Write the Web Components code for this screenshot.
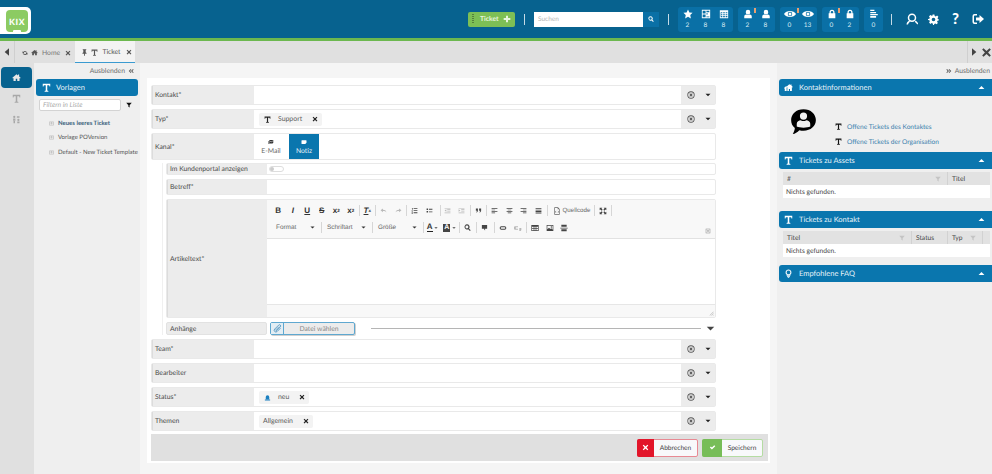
<!DOCTYPE html>
<html lang="de">
<head>
<meta charset="utf-8">
<title>KIX Ticket</title>
<style>
  html, body { margin: 0; padding: 0; }
  body { width: 992px; height: 474px; overflow: hidden; font-family: Lato, "Open Sans", sans-serif; font-size: 8px; color: #4a4a4a; background: #f5f5f5; text-rendering: geometricPrecision; }
</style>
</head>
<body>
<kix-app></kix-app>
<script>
// icon shapes, all on a 24x24 box
const ICONS = {
  t: '<path d="M2 2h20v7h-2l-1-3h-5v14l3 1v2H7v-2l3-1V6H5L4 9H2z"/>',
  home: '<path d="M12 3 1 12.5 2.5 14.5 4 13.2V21h6v-6h4v6h6v-7.8l1.5 1.3 1.5-2-4-3.4V4h-3v2.6z"/>',
  homes: '<path d="M14 3 6 10.5 7.5 12 9 11v10h4v-5h3v5h5V11l1 1 1.6-1.5L20 7.500V4h-2.500v1.500zM6 8 0 13.500 1 15l1-.7V21h5V10z"/>',
  x: '<path d="M5.500 2.500 12 8.500l6.500-6 3 3-6 6.500 6 6.500-3 3-6.500-6-6.500 6-3-3 6-6.500-6-6.500z"/>',
  plus: '<path d="M9 2h6v7h7v6h-7v7H9v-7H2V9h7z"/>',
  star: '<path d="m12 1 3.400 7.300 7.600.9-5.600 5.400 1.500 7.900L12 18.600 5.100 22.500l1.500-7.900L1 9.200l7.600-.9z"/>',
  search: '<path fill-rule="evenodd" d="M10 1a9 9 0 0 1 7.200 14.400l5.800 5.800-2.800 2.800-5.800-5.800A9 9 0 1 1 10 1zm0 4a5 5 0 1 0 0 10 5 5 0 0 0 0-10z"/>',
  user: '<path d="M12 2a5.500 5.500 0 1 1 0 11 5.500 5.500 0 0 1 0-11zM3 22v-4c0-3 2-5 5-5 2.500 1.500 5.500 1.500 8 0 3 0 5 2 5 5v4z"/>',
  eye: '<path fill-rule="evenodd" d="M0 12C4 4 20 4 24 12 20 20 4 20 0 12zm12-4.500a4.500 4.500 0 1 0 0 9 4.500 4.500 0 0 0 0-9zm0 1.500a3 3 0 1 1 0 6 3 3 0 0 1 0-6z"/>',
  lock: '<path fill-rule="evenodd" d="M6 10V8a6 6 0 0 1 12 0v2h2v12H4V10zm3 0h6V8a3 3 0 0 0-6 0z"/>',
  board: '<path fill-rule="evenodd" d="M2 2h20v20H2zm2 2v7h7V4zm9 0v4h7V4zm0 6v3h3v-3zm-9 3v7h7v-7zm9 5v2h7v-2z"/>',
  cal: '<path fill-rule="evenodd" d="M2 3h20v19H2zm2 5v12h4v-4H5v-2h3v-2H5v-2h3V8zm6 0v2h4V8zm6 0v2h4V8zm-6 4v2h4v-2zm6 0v2h4v-2zm-6 4v4h4v-4zm6 0v4h4v-4z"/>',
  list: '<path d="M3 2h10v3H3zM3 7h14v3H3zM3 12h18v3H3zM3 17h14v4H3z"/>',
  gear: '<path fill-rule="evenodd" d="M10 1h4l.7 3.200 2.300 1 2.800-1.800 2.800 2.800L20.800 9l1 2.300L24 12v0l0 1.900-3.200.7-1 2.300 1.800 2.800-2.800 2.800-2.800-1.800-2.300 1L13 24h-2l-.7-3.200-2.300-1-2.800 1.800-2.800-2.800L4 16l-1-2.300L0 13v-2l3-.7 1-2.300-1.800-2.800 2.800-2.800L8 4l2-.8zm2 7a4 4 0 1 0 0 8 4 4 0 0 0 0-8z"/>',
  signout: '<path d="M10 2H5a4 4 0 0 0-4 4v12a4 4 0 0 0 4 4h5v-3H5.500A1.500 1.500 0 0 1 4 17.500v-11A1.500 1.500 0 0 1 5.500 5H10z"/><path d="M15 4l9 8-9 8v-5H8V9h7z"/>',
  usersearch: '<path fill-rule="evenodd" d="M12 1a8.500 8.500 0 1 1 0 17 8.500 8.500 0 0 1 0-17zm0 3a5.500 5.500 0 1 0 0 11 5.500 5.500 0 0 0 0-11z"/><path d="M1 23c0-3 2-6 5-7.500l2.500 2C6 19 4.500 20.500 4 23zM23 23l-5.500-5.500 2-2.500 5 5.500z"/>',
  pin: '<path d="M6 1h12v2.500l-2 1V11l3 3v2.500h-5.500V22L12 24l-1.500-2v-5.500H5V14l3-3V4.500l-2-1z"/>',
  refresh: '<path d="M19.500 9A8 8 0 0 0 5 7.500L2 5v8h8L7.500 10A5 5 0 0 1 16.500 10zM4.500 15A8 8 0 0 0 19 16.500l3 2.500v-8h-8l2.500 3a5 5 0 0 1-9 0z"/>',
  left: '<path d="M18 1v22L5 12z"/>',
  right: '<path d="M6 1v22l13-11z"/>',
  up: '<path d="M12 7 22 17H2z"/>',
  down: '<path d="M2 7h20L12 17z"/>',
  funnel: '<path d="M1 3h22l-8.500 9.500V22l-5-3v-6.500z"/>',
  dleft: '<path d="M11 4 3 12l8 8 2.500-2.500L8 12l5.500-5.500zM20 4l-8 8 8 8 2.500-2.500L17 12l5.500-5.500z"/>',
  dright: '<path d="m4 4 8 8-8 8-2.500-2.500L7 12 1.500 6.500zm9 0 8 8-8 8-2.500-2.500L16 12l-5.500-5.500z"/>',
  mail: '<path d="M5 4h16v12H5zM2 8h2v10h15v2H2z"/><path fill="#fff" d="m6 6 7 5 7-5v1.500l-7 5-7-5z"/>',
  note: '<path d="M4 5h16a2 2 0 0 1 2 2v8l-5 5H4a2 2 0 0 1-2-2V7a2 2 0 0 1 2-2z"/>',
  doc: '<path fill-rule="evenodd" d="M3 2h18v20H3zm2 2v16h14V4zm3 3h8v2H8zm0 4h8v2H8zm0 4h8v2H8z"/>',
  bubble: '<path fill-rule="evenodd" d="M12 1c6.500 0 11 4.300 11 9.700 0 5.300-4.500 9.500-11 9.500-1.300 0-2.500-.2-3.700-.5C6.500 21.500 4.500 23 2.500 23c1-1.500 1.700-3.300 1.800-5.200C2 16 1 13.500 1 10.700 1 5.300 5.500 1 12 1zm0 3a3.200 3.200 0 1 0 0 6.400A3.200 3.200 0 0 0 12 4zM6 16.500c2.500 1.300 9.500 1.300 12 0V14c0-2-2-3.200-3.500-3.200-1.500 1-3.500 1-5 0C8 10.800 6 12 6 14z"/>',
  bulb: '<path fill-rule="evenodd" d="M12 1a8 8 0 0 1 5 14.200V18H7v-2.800A8 8 0 0 1 12 1zm0 3a5 5 0 0 0-3 9l1 1h4l1-1a5 5 0 0 0-3-9zM8 19h8v2H8zM10 22h4v2h-4z"/>',
  people: '<path d="M6 2a3 3 0 1 1 0 6 3 3 0 0 1 0-6zM3 9h6v6H3zM4 16h4v6H4zM17 10a3 3 0 1 1 0 6 3 3 0 0 1 0-6zM14 17h6v5h-6zM13 3h7v2h-7zM13 6h7v2h-7z"/>',
  circlex: '<path fill-rule="evenodd" d="M12 1a11 11 0 1 1 0 22 11 11 0 0 1 0-22zm0 2.500a8.500 8.500 0 1 0 0 17 8.500 8.500 0 0 0 0-17zM9 7l3 3 3-3 2 2-3 3 3 3-2 2-3-3-3 3-2-2 3-3-3-3z"/>',
  check: '<path d="M3 12l3.500-3.500L10 12l8-8 3.500 3.500L10 19z"/>',
  clip: '<path fill="none" stroke="currentColor" stroke-width="2" d="M20 11 11 20a4.500 4.500 0 0 1-6.500-6.500L15 3a3 3 0 0 1 4.500 4.500L9.500 17.500a1.500 1.500 0 0 1-2-2L16 7"/>',
  beacon: '<path d="M6 10a6 6 0 0 1 12 0v8H6zM3 19h18v3H3z"/>',
  undo: '<path d="M10 5v4c6 0 11 2 12 10-2-4-6-5-12-5v4L2 11z"/>',
  redo: '<path d="M14 5v4C8 9 3 11 2 19c2-4 6-5 12-5v4l8-7z"/>',
  ol: '<path d="M9 4h13v3H9zM9 11h13v3H9zM9 18h13v3H9zM3 3h3v6H4V5H3zM2 12h4v1.500L4.500 15H6v1.500H2V15l2-1.500H2zM2 18h4v5H2v-1.200h2.500v-.8H3v-.8h1.500v-.8H2z"/>',
  ul: '<path d="M2 5h5v5H2zM10 6h12v3H10zM2 14h5v5H2zM10 15h12v3H10z"/>',
  outdent: '<path d="M2 3h20v2.500H2zM11 8h11v2.500H11zM11 13h11v2.500H11zM2 18.500h20V21H2zM8 7.500v9L2 12z"/>',
  indent: '<path d="M2 3h20v2.500H2zM11 8h11v2.500H11zM11 13h11v2.500H11zM2 18.500h20V21H2zM2 7.500v9L8 12z"/>',
  quote: '<path d="M3 5h7v7c0 4-2 6-5 7l-1-2c2-1 3-2 3-4H3zM14 5h7v7c0 4-2 6-5 7l-1-2c2-1 3-2 3-4h-4z"/>',
  al: '<path d="M2 4h20v2.500H2zM2 9h12v2.500H2zM2 14h20v2.500H2zM2 19h12v2.500H2z"/>',
  ac: '<path d="M2 4h20v2.500H2zM6 9h12v2.500H6zM2 14h20v2.500H2zM6 19h12v2.500H6z"/>',
  ar: '<path d="M2 4h20v2.500H2zM10 9h12v2.500H10zM2 14h20v2.500H2zM10 19h12v2.500H10z"/>',
  aj: '<path d="M2 4h20v3H2zM2 9h20v3H2zM2 14h20v3H2zM2 19h20v3H2z"/>',
  source: '<path fill-rule="evenodd" d="M4 1h11l5 5v17H4zm2 2v18h12V7h-4V3zM9 11l-3 3.500L9 18l1-1-2-2.500 2-2.500zm6 0-1 1 2 2.500-2 2.500 1 1 3-3.500z"/>',
  max: '<path d="M2 2h8L7.500 4.500 11 8 8 11 4.500 7.500 2 10zM22 2v8l-2.500-2.500L16 11l-3-3 3.500-3.500L14 2zM2 22v-8l2.500 2.500L8 13l3 3-3.500 3.500L10 22zM22 22h-8l2.500-2.500L13 16l3-3 3.500 3.500L22 14z"/>',
  flag: '<path d="M3 3h18v13h-7v6l-3-3v-3H3z"/>',
  link: '<path fill-rule="evenodd" d="M7 7h10a5 5 0 0 1 0 10H7A5 5 0 0 1 7 7zm0 3a2 2 0 1 0 0 4h10a2 2 0 1 0 0-4z"/>',
  unlink: '<path fill-rule="evenodd" d="M3 7h9v3H7a2 2 0 1 0 0 4h5v3H7A5 5 0 0 1 3 7zm13 5h6v6l-2 3h-4z"/>',
  table: '<path fill-rule="evenodd" d="M1 3h22v18H1zm2 5v4h5V8zm7 0v4h4V8zm6 0v4h5V8zM3 14v5h5v-5zm7 0v5h4v-5zm6 0v5h5v-5z"/>',
  image: '<path fill-rule="evenodd" d="M2 3h20v18H2zm2 2v11l5-5 4 4 3-2 4 4V5zm12 2a2 2 0 1 1 0 4 2 2 0 0 1 0-4z"/>',
  hr: '<path d="M4 2h16v6H4zM1 11h22v2.500H1zM4 16h16v6H4z"/>',
  collapse: '<path fill-rule="evenodd" d="M3 3h18v18H3zm2 2v14h14V5zm2 5h10l-5 6z"/>',
  resize: '<path d="M22 6v2L8 22H6zM22 13v2l-7 7h-2zM22 19v2l-1 1h-2z"/>'
};

class KixIcon extends HTMLElement {
  connectedCallback() {
    if (this.shadowRoot) return;
    const size = this.getAttribute('size') || 10;
    this.attachShadow({mode: 'open'}).innerHTML =
      `<style>:host{display:inline-flex;flex:none;line-height:0} svg{display:block;fill:currentColor}</style>
       <svg width="${size}" height="${size}" viewBox="0 0 24 24">${ICONS[this.getAttribute('name')] || ''}</svg>`;
  }
}
customElements.define('kix-icon', KixIcon);

class KixStat extends HTMLElement {
  connectedCallback() {
    if (this.shadowRoot) return;
    const flag = this.hasAttribute('flag') ? '<i></i>' : '';
    const icon = this.getAttribute('icon');
    this.attachShadow({mode: 'open'}).innerHTML =
      `<style>
        :host{display:flex;flex-direction:column;align-items:center;width:18px;color:#d5e8f2;font-size:6.500px;line-height:9px;gap:2px}
        .ic{position:relative;height:10px;color:#fff;display:flex;align-items:center}
        i{position:absolute;right:-3px;top:-1px;width:1.5px;height:5px;background:#e8a070}
      </style>
      <div class="ic"><kix-icon name="${icon}" size="${icon == 'eye' ? 12 : 10}"></kix-icon>${flag}</div>
      <span>${this.getAttribute('value')}</span>`;
  }
}
customElements.define('kix-stat', KixStat);

class KixStatGroup extends HTMLElement {
  constructor() {
    super();
    this.attachShadow({mode: 'open'}).innerHTML =
      `<style>:host{display:flex;align-items:center;height:25px;background:#0a70a6;border-radius:3px;padding:0 .5px;margin-right:5px}</style><slot></slot>`;
  }
}
customElements.define('kix-stat-group', KixStatGroup);

class KixHeader extends HTMLElement {
  constructor() {
    super();
    this.attachShadow({mode: 'open'}).innerHTML =
      `<style>
        :host{display:flex;align-items:center;height:38px;background:#07628f;border-bottom:3px solid #6cb84f;color:#fff}
        .logo{width:31px;height:27px;margin-top:3px;background:#fff;border-radius:0 5px 5px 0;display:flex;justify-content:flex-end;align-items:center;padding-right:3px;box-sizing:border-box}
        .logo div{width:22px;height:22px;background:#8ccb62;border-radius:4px;color:#fff;font:900 8.500px Lato,sans-serif;display:flex;flex-direction:column;align-items:center;justify-content:flex-end;letter-spacing:.6px}
        .logo span{line-height:8px;margin-bottom:4px}
        .logo i{width:8px;height:2px;background:#fff;border-radius:1px 1px 0 0}
        .new{margin-left:437px;width:47px;height:15px;background:#7dbf55;border-radius:2px;display:flex;align-items:center;box-sizing:border-box;padding:0 4px 0 4px;font-size:6.800px;font-weight:700;color:#e8f5df}
        .new b{width:2px;height:10px;margin-right:6px;background:repeating-linear-gradient(#55803c 0 1px,transparent 1px 2px)}
        .new kix-icon{margin-left:auto}
        .sep{width:1px;height:11px;background:#c5dbe6}
        .s1{margin:0 9px}.s2{margin:0 9px}.s3{margin:0 14px 0 3px}
        .search{display:flex;height:15px}
        .search div{width:109px;background:#fff;color:#b5b5b5;font-size:6.500px;line-height:15px;padding-left:4px;box-sizing:border-box}
        .search span{width:16px;background:#0a70a6;display:flex;align-items:center;justify-content:center}
        .tools{display:flex;align-items:center}
        .q{font:900 15px Lato,sans-serif;line-height:14px;width:13px;text-align:center}
      </style>
      <div class="logo"><div><span>KIX</span><i></i></div></div>
      <div class="new"><b></b><span>Ticket</span><kix-icon name="plus" size="8"></kix-icon></div>
      <div class="sep s1"></div>
      <div class="search"><div>Suchen</div><span><kix-icon name="search" size="6"></kix-icon></span></div>
      <div class="sep s2"></div>
      <kix-stat-group><kix-stat icon="star" value="2"></kix-stat><kix-stat icon="board" value="8"></kix-stat><kix-stat icon="cal" value="8"></kix-stat></kix-stat-group>
      <kix-stat-group><kix-stat icon="user" value="2" flag></kix-stat><kix-stat icon="user" value="8"></kix-stat></kix-stat-group>
      <kix-stat-group><kix-stat icon="eye" value="0" flag></kix-stat><kix-stat icon="eye" value="13"></kix-stat></kix-stat-group>
      <kix-stat-group><kix-stat icon="lock" value="0" flag></kix-stat><kix-stat icon="lock" value="2"></kix-stat></kix-stat-group>
      <kix-stat-group><kix-stat icon="list" value="0"></kix-stat></kix-stat-group>
      <div class="sep s3"></div>
      <div class="tools">
        <kix-icon name="usersearch" size="12" style="margin-right:10px"></kix-icon>
        <kix-icon name="gear" size="11" style="margin-right:10px"></kix-icon>
        <div class="q">?</div>
        <kix-icon name="signout" size="12" style="margin-left:10px"></kix-icon>
      </div>`;
  }
}
customElements.define('kix-header', KixHeader);

class KixTab extends HTMLElement {
  constructor() {
    super();
    this.attachShadow({mode: 'open'}).innerHTML =
      `<style>
        :host{display:flex;align-items:center;justify-content:center;gap:3px;width:60px;height:22px;box-sizing:border-box;font-size:6.800px;color:#777;padding:1px 0 0 3px}
        :host([active]){background:#f3f3f3;border-bottom:1px solid #3a9ad0;color:#555}
        ::slotted(kix-icon){color:#555}
        ::slotted(span){margin:0 2px 0 1px}
      </style><slot></slot>`;
  }
}
customElements.define('kix-tab', KixTab);

class KixTabbar extends HTMLElement {
  constructor() {
    super();
    this.attachShadow({mode: 'open'}).innerHTML =
      `<style>
        :host{display:flex;align-items:stretch;height:22px;background:#e0e0e0;color:#444}
        .end{display:flex;align-items:center;justify-content:center}
        .l{width:14px;border-right:1px solid #cfcfcf;margin-right:0}
        .r{margin-left:auto;width:25px;border-left:1px solid #cfcfcf;gap:3px;justify-content:flex-start;padding-left:2px;box-sizing:border-box}
      </style>
      <div class="end l"><kix-icon name="left" size="8"></kix-icon></div>
      <kix-tab><kix-icon name="refresh" size="6"></kix-icon><kix-icon name="home" size="7"></kix-icon><span>Home</span><kix-icon name="x" size="6"></kix-icon></kix-tab>
      <kix-tab active><kix-icon name="pin" size="7"></kix-icon><kix-icon name="t" size="7"></kix-icon><span>Ticket</span><kix-icon name="x" size="6"></kix-icon></kix-tab>
      <div class="end r"><kix-icon name="right" size="8"></kix-icon><kix-icon name="x" size="11"></kix-icon></div>`;
  }
}
customElements.define('kix-tabbar', KixTabbar);

class KixNav extends HTMLElement {
  constructor() {
    super();
    this.attachShadow({mode: 'open'}).innerHTML =
      `<style>
        :host{display:flex;flex-direction:column;align-items:flex-start;background:#e0e0e0;padding:4px 0 0 1px;box-sizing:border-box;color:#a8a8a8}
        div{width:31px;height:21px;display:flex;align-items:center;justify-content:center}
        .on{background:#07628f;border-radius:4px;color:#e8e8e8}
      </style>
      <div class="on"><kix-icon name="home" size="9"></kix-icon></div>
      <div><kix-icon name="t" size="9"></kix-icon></div>
      <div><kix-icon name="people" size="9"></kix-icon></div>`;
  }
}
customElements.define('kix-nav', KixNav);

class KixHide extends HTMLElement {
  connectedCallback() {
    if (this.shadowRoot) return;
    const right = this.hasAttribute('right');
    this.attachShadow({mode: 'open'}).innerHTML =
      `<style>:host{display:flex;align-items:center;justify-content:flex-end;gap:3px;height:16px;color:#6e6e6e;font-size:6.800px;padding-right:${right ? 2 : 4}px;box-sizing:border-box}
       kix-icon{color:#555}</style>` +
      (right ? '<kix-icon name="dright" size="6"></kix-icon><span>Ausblenden</span>'
             : '<span>Ausblenden</span><kix-icon name="dleft" size="6"></kix-icon>');
  }
}
customElements.define('kix-hide', KixHide);

class KixBar extends HTMLElement {
  connectedCallback() {
    if (this.shadowRoot) return;
    const arrow = this.hasAttribute('open') ? '<kix-icon class="a" name="up" size="7"></kix-icon>' : '';
    this.attachShadow({mode: 'open'}).innerHTML =
      `<style>
        :host{display:flex;align-items:center;height:17px;background:#0a76ae;border-radius:3px 0 0 3px;color:#e8f3f9;font-size:7.500px;padding:0 7px 0 4px;gap:6px;box-sizing:border-box}
        :host([round]){border-radius:3px;padding-left:5px;gap:5px}
        .i{width:10px;display:flex;justify-content:center;color:#fff}
        .a{margin-left:auto;color:#fff}
      </style>
      <span class="i"><kix-icon name="${this.getAttribute('icon')}" size="${this.getAttribute('size') || 9}"></kix-icon></span><span>${this.getAttribute('label')}</span>${arrow}`;
  }
}
customElements.define('kix-bar', KixBar);

class KixTemplates extends HTMLElement {
  constructor() {
    super();
    const item = (t, b) => `<li class="${b ? 'b' : ''}"><kix-icon name="doc" size="5"></kix-icon><span>${t}</span></li>`;
    this.attachShadow({mode: 'open'}).innerHTML =
      `<style>
        :host{display:block;background:#efefef;padding:0 2px}
        .f{display:flex;align-items:center;margin:3px 0 0 3px}
        .f div{width:82px;height:12px;border:1px solid #d3d3d3;border-radius:2px;background:#fff;box-sizing:border-box;font-style:italic;color:#aaa;font-size:6.800px;line-height:10px;padding-left:3px}
        .f kix-icon{margin-left:5px;color:#111}
        ul{list-style:none;margin:5px 0 0;padding:0 0 0 13px}
        li{display:flex;align-items:center;gap:4px;height:14.500px;font-size:6px;color:#555;white-space:nowrap}
        li kix-icon{color:#999}
        li.b{font-weight:700;color:#37607a}
      </style>
      <kix-hide></kix-hide>
      <kix-bar round icon="t" label="Vorlagen"></kix-bar>
      <div class="f"><div>Filtern in Liste</div><kix-icon name="funnel" size="6"></kix-icon></div>
      <ul>${item('Neues leeres Ticket', true)}${item('Vorlage POVersion')}${item('Default - New Ticket Template')}</ul>`;
  }
}
customElements.define('kix-templates', KixTemplates);

class KixRow extends HTMLElement {
  connectedCallback() {
    if (this.shadowRoot) return;
    const w = this.getAttribute('label-width') || 103;
    const actions = this.hasAttribute('actions')
      ? '<div class="act"><kix-icon name="circlex" size="8"></kix-icon><kix-icon name="down" size="6"></kix-icon></div>' : '';
    this.attachShadow({mode: 'open'}).innerHTML =
      `<style>
        :host{display:flex;height:20px;box-sizing:border-box;background:#fff;border:1px solid #e9e9e9;border-radius:2px;font-size:6.800px}
        .lab{width:${w - 1}px;flex:none;background:#ececec;color:#4a4a4a;display:flex;align-items:center;padding-left:3px;box-sizing:border-box;box-shadow:inset 1px 0 #dcdcdc}
        :host([tall]) .lab{padding-left:3px}
        .val{flex:1;min-width:0;display:flex;align-items:center}
        .act{width:34px;flex:none;background:#ececec;display:flex;align-items:center;gap:10px;padding-left:6px;box-sizing:border-box;color:#555}
        .act kix-icon:last-child{color:#222}
      </style>
      <div class="lab">${this.getAttribute('label')}</div><div class="val"><slot></slot></div>${actions}`;
  }
}
customElements.define('kix-row', KixRow);

class KixChip extends HTMLElement {
  connectedCallback() {
    if (this.shadowRoot) return;
    const icon = this.getAttribute('icon');
    this.attachShadow({mode: 'open'}).innerHTML =
      `<style>
        :host{display:inline-flex;align-items:center;height:13px;margin-left:5px;background:#f3f3f3;border-radius:2px;padding:0 4px 0 4px;font-size:6.900px;color:#5a5a5a}
        .i{width:7px;margin:0 7px 0 1px;color:#222;display:flex}
        .x{margin-left:10px;color:#222}
      </style>
      ${icon ? `<span class="i" style="color:${this.getAttribute('icon-color') || '#222'}"><kix-icon name="${icon}" size="7"></kix-icon></span>` : ''}
      <span>${this.getAttribute('label')}</span><kix-icon class="x" name="x" size="6"></kix-icon>`;
  }
}
customElements.define('kix-chip', KixChip);

class KixChannel extends HTMLElement {
  connectedCallback() {
    if (this.shadowRoot) return;
    this.attachShadow({mode: 'open'}).innerHTML =
      `<style>
        :host{display:flex;flex-direction:column;align-items:center;justify-content:center;gap:2px;width:${this.getAttribute('w') || 30}px;height:25px;font-size:6.800px;color:#666;background:#fff;margin-right:1px}
        :host([active]){background:#0a76ae;color:#e6f2f8}
        kix-icon{color:#333}
        :host([active]) kix-icon{color:#fff}
      </style>
      <kix-icon name="${this.getAttribute('icon')}" size="6"></kix-icon><span>${this.getAttribute('label')}</span>`;
  }
}
customElements.define('kix-channel', KixChannel);

class KixEditor extends HTMLElement {
  constructor() {
    super();
    const ic = (n, dim, size) => `<span class="b${dim ? ' dim' : ''}"><kix-icon name="${n}" size="${size || 7}"></kix-icon></span>`;
    const tx = h => `<span class="b tx">${h}</span>`;
    const sep = (m) => `<i class="sep"${m ? ` style="margin:${m}"` : ''}></i>`;
    const combo = (t, w) => `<span class="combo" style="width:${w}px"><span>${t}</span><kix-icon name="down" size="5"></kix-icon></span>`;
    const colour = h => `<span class="col">${h}<kix-icon name="down" size="4"></kix-icon></span>`;
    this.attachShadow({mode: 'open'}).innerHTML =
      `<style>
        :host{display:flex;flex-direction:column;flex:1;height:100%;background:#fff;box-sizing:border-box;font-family:"Liberation Sans",sans-serif}
        .bar{background:#f8f8f8;height:39px;border-bottom:1px solid #e2e2e2;box-sizing:border-box;padding:2px 0 0 4px;flex:none;position:relative}
        .r{display:flex;align-items:center;height:17px;color:#444}
        .b{width:14.500px;flex:none;display:flex;align-items:center;justify-content:center;height:14px}
        .dim{opacity:.35}
        .tx{font:700 8px "Liberation Sans",sans-serif;color:#333}
        .tx sub,.tx sup{font-size:4.500px;line-height:0}
        .sep{width:1px;height:11px;background:#d6d6d6;flex:none;margin:0 .5px}
        .src{display:flex;align-items:center;gap:2px;color:#666;font-size:6.200px;padding:0 0 0 4px;width:45px;box-sizing:border-box;flex:none}
        .combo{display:flex;align-items:center;justify-content:space-between;box-sizing:border-box;padding:0 5px 0 5px;font-size:6.400px;color:#666;flex:none}
        .combo kix-icon{color:#333}
        .col{display:flex;align-items:center;justify-content:center;gap:1.5px;width:17px;flex:none}
        .col b{font:700 8px "Liberation Sans",sans-serif;border-bottom:1.500px solid #222;line-height:8px;color:#333}
        .col em{font:700 7px "Liberation Sans",sans-serif;background:#444;color:#fff;padding:0 1px;line-height:8px}
        .collapse{position:absolute;right:4px;bottom:4px;color:#888}
        .edit{flex:1;background:#fff}
        .foot{flex:none;height:13px;background:#f8f8f8;border-top:1px solid #e6e6e6;display:flex;justify-content:flex-end;align-items:flex-end;padding:0 1px 1px 0;box-sizing:border-box;color:#999}
      </style>
      <div class="bar">
        <div class="r">${tx('B')}${tx('<em>I</em>')}${tx('<u>U</u>')}${tx('<s>S</s>')}${tx('x<sub>2</sub>')}${tx('x<sup>2</sup>')}${sep()}${tx('<em><u>T</u></em><sub>x</sub>')}${sep()}${ic('undo', 1)}${ic('redo', 1)}${sep()}${ic('ol')}${ic('ul')}${sep('0 -.5px 0 3px')}${ic('outdent', 1)}${ic('indent', 1)}${sep()}${ic('quote')}${sep()}${ic('al')}${ic('ac')}${ic('ar')}${ic('aj')}${sep('0 .5px 0 1.500px')}<span class="src"><kix-icon name="source" size="8"></kix-icon><span>Quellcode</span></span>${sep()}${ic('max', 0, 8)}${sep()}</div>
        <div class="r">${combo('Format', 49)}${sep()}${combo('Schriftart', 49)}${sep()}${combo('Größe', 49)}${sep()}${colour('<b>A</b>')}${colour('<em>A</em>')}${sep()}${ic('search')}${sep('0 1px')}${ic('flag')}${sep('0 1.500px')}${ic('link', 0, 8)}${ic('unlink', 1, 8)}${sep('0 1px')}${ic('table', 0, 8)}${ic('image', 0, 8)}${ic('hr', 0, 8)}</div>
        <kix-icon class="collapse" name="collapse" size="6"></kix-icon>
      </div>
      <div class="edit"></div>
      <div class="foot"><kix-icon name="resize" size="6"></kix-icon></div>`;
  }
}
customElements.define('kix-editor', KixEditor);

class KixAttachments extends HTMLElement {
  constructor() {
    super();
    this.attachShadow({mode: 'open'}).innerHTML =
      `<style>
        :host{display:flex;align-items:center;height:13px;font-size:6.800px}
        .lab{width:101px;height:13px;flex:none;background:#ececec;border:1px solid #e2e2e2;border-radius:2px;box-sizing:border-box;display:flex;align-items:center;padding-left:3px;color:#4a4a4a}
        .file{margin-left:3px;width:85px;height:13px;border:1px solid #5fa8d0;border-radius:2px;box-sizing:border-box;background:#ececec;display:flex;align-items:stretch;color:#888;box-shadow:1px 1px 0 #d0d0d0}
        .clip{width:12px;border-right:1px solid #5fa8d0;display:flex;align-items:center;justify-content:center;color:#3a86b5;background:#e4eef4}
        .txt{flex:1;display:flex;align-items:center;justify-content:center}
        .line{flex:1;height:1px;background:#b5b5b5;margin:0 5px 0 16px}
        .c{color:#444;margin-right:1px}
      </style>
      <div class="lab">Anhänge</div>
      <div class="file"><span class="clip"><kix-icon name="clip" size="9"></kix-icon></span><span class="txt">Datei wählen</span></div>
      <div class="line"></div><kix-icon class="c" name="down" size="9"></kix-icon>`;
  }
}
customElements.define('kix-attachments', KixAttachments);

class KixButton extends HTMLElement {
  connectedCallback() {
    if (this.shadowRoot) return;
    const c = this.getAttribute('color');
    this.attachShadow({mode: 'open'}).innerHTML =
      `<style>
        :host{display:flex;width:61px;height:18px;border:1px solid ${this.getAttribute('edge')};border-radius:2px;box-sizing:border-box;background:#f8f9fb;font-size:6.600px;color:#444}
        .i{width:${this.getAttribute('w')}px;background:${c};color:#fff;display:flex;align-items:center;justify-content:center;margin:-1px 0 -1px -1px;border-radius:2px 0 0 2px}
        .t{flex:1;display:flex;align-items:center;justify-content:center}
      </style>
      <span class="i"><kix-icon name="${this.getAttribute('icon')}" size="7"></kix-icon></span><span class="t">${this.getAttribute('label')}</span>`;
  }
}
customElements.define('kix-button', KixButton);

class KixForm extends HTMLElement {
  constructor() {
    super();
    this.attachShadow({mode: 'open'}).innerHTML =
      `<style>
        :host{display:block;background:#f5f5f5;padding:15px 7px 0}
        .sheet{background:#fff;height:385px;padding:7px 2px 0 4px;box-sizing:border-box}
        .rows{width:565px;display:flex;flex-direction:column;gap:4px}
        .kanal{height:27px}
        .nested{margin:-1px 0 0 11px;border-left:1px solid #f0f0f0;padding-left:3px;display:flex;flex-direction:column;gap:4px}
        .toggle{width:15px;height:6px;border:1px solid #ddd;border-radius:4px;box-sizing:border-box;margin-left:2px;position:relative;background:#fff}
        .toggle::before{content:"";position:absolute;left:0;top:0;width:4px;height:4px;background:#ccc;border-radius:50%}
        .foot{margin-top:3px;width:617px;height:27px;background:#e0e0e0;display:flex;justify-content:flex-end;align-items:center;gap:4px;padding-right:5px;box-sizing:border-box}
      </style>
      <div class="sheet">
        <div class="rows">
          <kix-row label="Kontakt*" actions></kix-row>
          <kix-row label="Typ*" actions><kix-chip icon="t" label="Support"></kix-chip></kix-row>
          <kix-row class="kanal" label="Kanal*"><div style="display:flex"><kix-channel w="34" icon="mail" label="E-Mail"></kix-channel><kix-channel active w="30" icon="note" label="Notiz"></kix-channel></div></kix-row>
          <div class="nested">
            <kix-row style="height:12px" label-width="101" label="Im Kundenportal anzeigen" tall><div class="toggle"></div></kix-row>
            <kix-row style="height:16px" label-width="101" label="Betreff*" tall></kix-row>
            <kix-row style="height:119px" label-width="101" label="Artikeltext*" tall><kix-editor></kix-editor></kix-row>
            <kix-attachments></kix-attachments>
          </div>
          <kix-row label="Team*" actions></kix-row>
          <kix-row label="Bearbeiter" actions></kix-row>
          <kix-row label="Status*" actions><kix-chip icon="beacon" icon-color="#1a7fc0" label="neu"></kix-chip></kix-row>
          <kix-row label="Themen" actions><kix-chip label="Allgemein"></kix-chip></kix-row>
        </div>
        <div class="foot">
          <kix-button color="#e2152a" edge="#e88a94" w="17" icon="x" label="Abbrechen"></kix-button>
          <kix-button color="#77bd58" edge="#b5dca3" w="20" icon="check" label="Speichern"></kix-button>
        </div>
      </div>`;
  }
}
customElements.define('kix-form', KixForm);

class KixTable extends HTMLElement {
  connectedCallback() {
    if (this.shadowRoot) return;
    const cols = JSON.parse(this.getAttribute('cols'));
    const head = cols.map(c =>
      `<div class="th" style="width:${c.w}px"><span>${c.t}</span>${c.f ? '<kix-icon name="funnel" size="6"></kix-icon>' : ''}</div>`).join('');
    this.attachShadow({mode: 'open'}).innerHTML =
      `<style>
        :host{display:block;margin:3px 2px 0 4px;font-size:6.700px;color:#444}
        .head{display:flex;height:13px;background:#e2e2e2}
        .th{display:flex;align-items:center;justify-content:space-between;box-sizing:border-box;padding:1px 6px 0 4px;border-right:1px solid #d2d2d2;flex:none}
        .th:last-child{border-right:none}
        .th kix-icon{color:#c4c4c4}
        .row{height:13px;background:#fff;display:flex;align-items:center;padding:1px 0 0 3px;box-sizing:border-box}
      </style>
      <div class="head">${head}</div><div class="row">Nichts gefunden.</div>`;
  }
}
customElements.define('kix-table', KixTable);

class KixSide extends HTMLElement {
  constructor() {
    super();
    this.attachShadow({mode: 'open'}).innerHTML =
      `<style>
        :host{display:block;background:#efefef;padding-left:2px}
        .contact{height:56px;display:flex;box-sizing:border-box;padding:12px 0 0 11px}
        .links{margin:13px 0 0 18px;display:flex;flex-direction:column;gap:4px;font-size:6.600px;color:#3a80ad}
        .links div{display:flex;align-items:center;gap:5px;height:11px}
        .links kix-icon{color:#111}
      </style>
      <kix-hide right></kix-hide>
      <kix-bar open icon="homes" label="Kontaktinformationen"></kix-bar>
      <div class="contact">
        <kix-icon name="bubble" size="27" style="color:#000"></kix-icon>
        <div class="links">
          <div><kix-icon name="t" size="7"></kix-icon><span>Offene Tickets des Kontaktes</span></div>
          <div><kix-icon name="t" size="7"></kix-icon><span>Offene Tickets der Organisation</span></div>
        </div>
      </div>
      <kix-bar open icon="t" label="Tickets zu Assets"></kix-bar>
      <kix-table cols='[{"t":"#","w":165,"f":1},{"t":"Titel","w":42}]'></kix-table>
      <kix-bar open icon="t" label="Tickets zu Kontakt" style="margin-top:13px"></kix-bar>
      <kix-table cols='[{"t":"Titel","w":129,"f":1},{"t":"Status","w":36},{"t":"Typ","w":35,"f":1},{"t":"","w":7}]'></kix-table>
      <kix-bar open icon="bulb" label="Empfohlene FAQ" style="margin-top:8px"></kix-bar>`;
  }
}
customElements.define('kix-side', KixSide);

class KixApp extends HTMLElement {
  constructor() {
    super();
    this.attachShadow({mode: 'open'}).innerHTML =
      `<style>
        :host{display:block;width:992px;height:474px;overflow:hidden}
        main{display:grid;grid-template-columns:34px 106px 637px 215px;height:411px}
      </style>
      <kix-header></kix-header>
      <kix-tabbar></kix-tabbar>
      <main><kix-nav></kix-nav><kix-templates></kix-templates><kix-form></kix-form><kix-side></kix-side></main>`;
  }
}
customElements.define('kix-app', KixApp);
</script>
</body>
</html>
